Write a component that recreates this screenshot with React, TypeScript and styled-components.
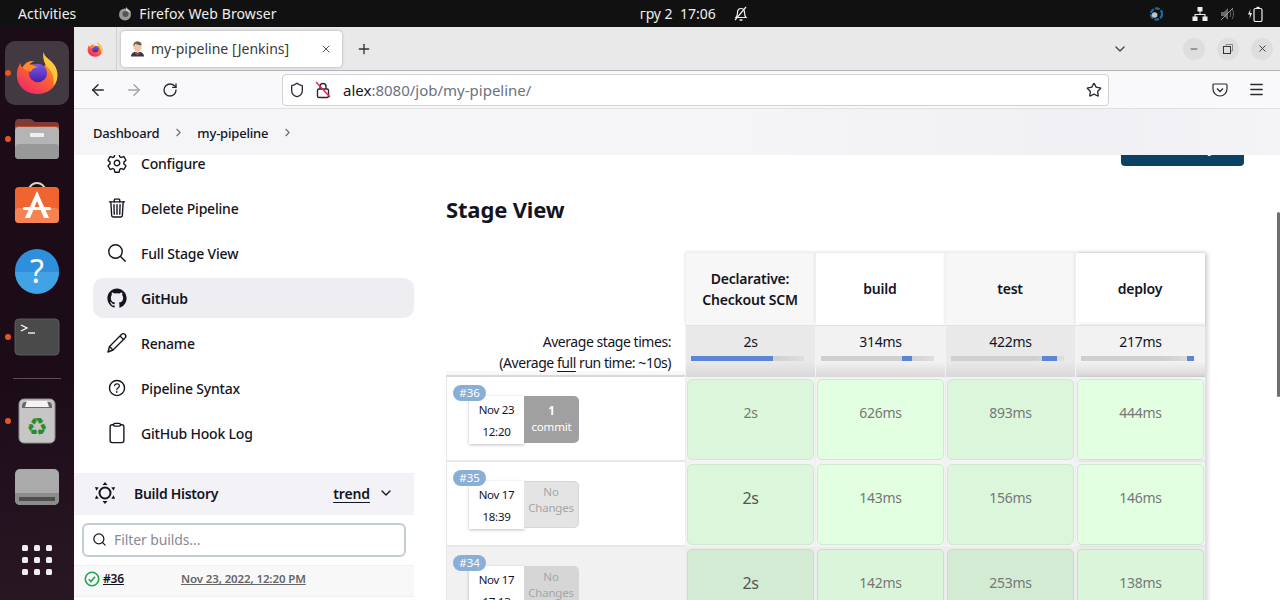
import React from 'react';
import styled, { createGlobalStyle } from 'styled-components';
import { ArrowLeft, ArrowRight, RotateCw, Star, Menu, X, Plus, ChevronDown, ChevronRight, Search, Minus, Shield } from 'lucide-react';
import {
    IoSettingsOutline,
    IoTrashOutline,
    IoSearchOutline,
    IoLogoGithub,
    IoHelpCircleOutline,
    IoClipboardOutline,
} from 'react-icons/io5';

const FONT = '"Noto Sans", "Open Sans", sans-serif';

const GlobalStyle = createGlobalStyle`
    html, body { margin:0; padding:0; background:#fff; overflow:hidden; }
    body { font-family:${FONT}; color:#14141f; }
    * { box-sizing:border-box; }
`;

const Desktop = styled.div`
    width:1280px;
    height:600px;
    display:flex;
    flex-direction:column;
    overflow:hidden;
`;

/* gnome top bar */
const TopBar = styled.div`
    height:27px;
    flex:none;
    background:#111;
    color:#eee;
    display:flex;
    align-items:center;
    font-size:14px;
    padding-left:18px;
`;
const AppMenu = styled.div`
    display:flex;
    align-items:center;
    gap:7px;
    margin-left:42px;
    letter-spacing:0.1px;
`;
const Clock = styled.div`
    margin-left:363px;
    white-space:pre;
`;
const Tray = styled.div`
    margin-left:auto;
    display:flex;
    align-items:center;
    gap:12px;
    padding-right:17px;
`;

const Body = styled.div`
    flex:1;
    display:flex;
    min-height:0;
`;

/* dock */
const Dock = styled.div`
    width:74px;
    flex:none;
    background:linear-gradient(170deg,#1b0c18 60%,#2a1724);
    padding-top:13px;
    display:flex;
    flex-direction:column;
    align-items:center;
`;
const DockSlot = styled.div<{ $active?:boolean; $dot?:boolean }>`
    width:64px;
    height:64px;
    margin:1px 0;
    flex:none;
    position:relative;
    display:flex;
    align-items:center;
    justify-content:center;
    border-radius:10px;
    background:${(p)=>p.$active?'#433a41':'transparent'};
    &::before{
        content:'';
        display:${(p)=>p.$dot?'block':'none'};
        position:absolute;
        left:0;
        top:29px;
        width:6px;
        height:6px;
        border-radius:50%;
        background:#e95420;
    }
`;
const DockSeparator = styled.div`
    width:48px;
    height:1px;
    background:#5a4d57;
    margin:8px 0 9px;
`;
const AppGrid = styled.div`
    display:grid;
    grid-template-columns:repeat(3,6px);
    gap:6px;
`;
const AppGridDot = styled.span`
    width:6px;
    height:6px;
    border-radius:1.5px;
    background:#eee;
`;
const DockLast = styled.div`
    margin-top:7px;
    height:66px;
    display:flex;
    align-items:center;
`;

/* browser */
const Browser = styled.div`
    flex:1;
    min-width:0;
    display:flex;
    flex-direction:column;
    position:relative;
`;
const TabBar = styled.div`
    height:44px;
    flex:none;
    background:#e9e9e9;
    border-bottom:1px solid #b4b4b4;
    display:flex;
    align-items:center;
`;
const FirefoxMenu = styled.div`
    width:43px;
    height:43px;
    border-right:1px solid #cfcfcf;
    display:flex;
    align-items:center;
    justify-content:center;
`;
const Tab = styled.div`
    width:221px;
    height:36px;
    margin-left:4px;
    background:#fff;
    border-radius:4px;
    box-shadow:0 0 3px rgba(0,0,0,0.3);
    display:flex;
    align-items:center;
    padding:0 10px 0 9px;
    gap:6px;
    font-size:14px;
    color:#3a3a3a;
`;
const TabTitle = styled.span`
    flex:1;
    white-space:nowrap;
`;
const IconSlot = styled.div<{ $w?:number; $ml?:number }>`
    width:${(p)=>p.$w||36}px;
    margin-left:${(p)=>p.$ml||0}px;
    flex:none;
    display:flex;
    align-items:center;
    justify-content:center;
`;
const WindowButton = styled.div`
    width:22px;
    height:22px;
    border-radius:50%;
    background:#dedede;
    display:flex;
    align-items:center;
    justify-content:center;
    margin-left:12px;
`;
const WindowButtons = styled.div`
    margin-left:auto;
    display:flex;
    padding-right:7px;
`;
const NavBar = styled.div`
    height:38px;
    flex:none;
    background:#f9f9fb;
    border-bottom:1px solid #e0e0e2;
    display:flex;
    align-items:center;
    padding-left:6px;
`;
const UrlBox = styled.div`
    width:827px;
    height:32px;
    margin-left:2px;
    background:#fff;
    border:1px solid #cfcfd8;
    border-radius:4px;
    display:flex;
    align-items:center;
    padding:0 6px 0 5px;
    font-size:15px;
    color:#6b7280;
`;
const UrlHost = styled.span`
    color:#15141a;
`;
const UrlText = styled.div`
    flex:1;
    margin-left:11px;
`;

/* jenkins page */
const Page = styled.div`
    flex:1;
    min-height:0;
    position:relative;
    overflow:hidden;
    background:#fff;
    display:flex;
    flex-direction:column;
`;
const Breadcrumbs = styled.div`
    height:46px;
    flex:none;
    position:relative;
    z-index:2;
    background:linear-gradient(90deg,#f5f5f7 55%,#f0f0f4 85%,#f4f4f7);
    display:flex;
    align-items:center;
    padding:1px 0 0 19px;
    font-size:13px;
    font-weight:500;
    color:#14141f;
`;
const Crumb = styled.span`
    white-space:nowrap;
    letter-spacing:-0.2px;
`;
const CrumbSep = styled.span`
    width:38px;
    display:flex;
    justify-content:center;
    color:#6b6b75;
`;
const Content = styled.div`
    flex:1;
    min-height:0;
    display:flex;
`;
const Sidebar = styled.div`
    width:340px;
    flex:none;
    margin-top:-12px;
    display:flex;
    flex-direction:column;
`;
const SideTasks = styled.div`
    display:flex;
    flex-direction:column;
    gap:5px;
    padding-left:19px;
`;
const SideItem = styled.div<{ $active?:boolean }>`
    height:40px;
    border-radius:10px;
    background:${(p)=>p.$active?'#eeeef2':'transparent'};
    display:flex;
    align-items:center;
    padding-left:13px;
    gap:13px;
    font-size:14px;
    letter-spacing:-0.2px;
    color:#14141f;
    font-weight:${(p)=>p.$active?600:500};
`;
const SideIcon = styled.span<{ $size?:number }>`
    width:22px;
    height:22px;
    flex:none;
    display:flex;
    align-items:center;
    justify-content:center;
    font-size:${(p)=>p.$size||22}px;
`;
const HistoryHead = styled.div`
    height:42px;
    margin-top:20px;
    flex:none;
    background:#f3f3f7;
    display:flex;
    align-items:center;
    padding:0 0 2px 19px;
    font-size:14px;
    font-weight:600;
`;
const HistoryTitle = styled.span`
    margin-left:17px;
    letter-spacing:-0.3px;
`;
const TrendLink = styled.span`
    margin-left:auto;
    text-decoration:underline;
    text-underline-offset:3px;
    letter-spacing:-0.1px;
`;
const TrendChevron = styled.span`
    display:flex;
    margin:0 20px 0 8px;
`;
const FilterBox = styled.div`
    height:34px;
    margin:8px 8px 0;
    flex:none;
    border:2px solid #c3ccd1;
    border-radius:6px;
    display:flex;
    align-items:center;
    gap:7px;
    padding:0 0 2px 8px;
    font-size:14px;
    color:#8a8a94;
    letter-spacing:-0.1px;
`;
const BuildRow = styled.div`
    height:32px;
    margin-top:8px;
    flex:none;
    background:#f8f8f8;
    border-top:1px solid #efefef;
    border-bottom:1px solid #efefef;
    display:flex;
    align-items:center;
    padding:0 0 5px 10px;
    font-size:12px;
    font-weight:600;
`;
const BuildLink = styled.span`
    margin-left:3px;
    text-decoration:underline;
    width:78px;
    letter-spacing:-0.2px;
`;
const BuildDate = styled.span`
    text-decoration:underline;
    color:#666;
    font-size:11.5px;
    letter-spacing:-0.12px;
`;

const Main = styled.div`
    flex:1;
    min-width:0;
    padding-left:32px;
    display:flex;
    flex-direction:column;
`;
const ActionButton = styled.div`
    align-self:flex-end;
    width:123px;
    height:38px;
    flex:none;
    margin:-27px 36px 0 0;
    background:#0b4264;
    border-radius:4px;
    color:#fff;
    font-size:14px;
    font-weight:600;
    display:flex;
    align-items:center;
    justify-content:center;
    white-space:nowrap;
`;
const Title = styled.h2`
    margin:28px 0 0;
    height:30px;
    line-height:30px;
    font-size:22px;
    font-weight:700;
    letter-spacing:-0.15px;
`;
const StageGrid = styled.div`
    margin-top:29px;
    display:grid;
    grid-template-columns:239px repeat(4,130px);
    grid-template-rows:72px 52px repeat(3,85px);
    width:759px;
`;
const StageHead = styled.div<{ $odd:boolean; $last?:boolean }>`
    background:${(p)=>p.$odd?'#f7f7f7':'#fff'};
    border-left:1px solid #f0f0f0;
    box-shadow:0 -1px 3px rgba(0,0,0,0.12)${(p)=>p.$last?',3px 0 4px rgba(0,0,0,0.15)':''};
    display:flex;
    align-items:center;
    justify-content:center;
    text-align:center;
    font-size:14px;
    font-weight:600;
    line-height:21px;
    letter-spacing:-0.2px;
    padding:0 1px 1px 0;
`;
const AvgLabel = styled.div`
    grid-column:1;
    display:flex;
    flex-direction:column;
    align-items:flex-end;
    justify-content:flex-end;
    padding:0 14px 2px 0;
    font-size:14px;
    line-height:21px;
    letter-spacing:-0.45px;
    border-bottom:2px solid #d9d9d9;
    background:linear-gradient(#fff 88%,#f4f4f4);
`;
const FullLink = styled.span`
    text-decoration:underline;
    text-underline-offset:3px;
`;
const AvgCell = styled.div<{ $odd:boolean; $last?:boolean }>`
    background:linear-gradient(${(p)=>p.$odd?'#e9e9e9':'#f2f2f2'} 70%,#d8d8d8);
    border-left:1px solid #f3f3f3;
    border-top:1px solid #e3e3e3;
    box-shadow:${(p)=>p.$last?'3px 0 4px rgba(0,0,0,0.15)':'none'};
    padding:6px 5px 0;
    text-align:center;
    font-size:14px;
    line-height:20px;
    letter-spacing:-0.3px;
    display:flex;
    flex-direction:column;
    align-items:center;
`;
const AvgBar = styled.div`
    width:113px;
    height:5px;
    margin:4px 6px 0 0;
    background:linear-gradient(90deg,#cfcfcf 72%,#dedede);
    position:relative;
`;
const AvgFill = styled.div<{ $left:number; $width:number }>`
    position:absolute;
    top:0;
    bottom:0;
    left:${(p)=>p.$left}px;
    width:${(p)=>p.$width}px;
    background:#5b86d6;
`;
const RunCell = styled.div<{ $shaded?:boolean }>`
    position:relative;
    border-left:1px solid #e6e6e6;
    border-bottom:2px solid #e8e8e8;
    background:${(p)=>p.$shaded?'#f1f1f1':'#fff'};
    padding:19px 0 0 22px;
    display:flex;
    align-items:flex-start;
`;
const RunBadge = styled.div`
    position:absolute;
    left:6px;
    top:8px;
    width:33px;
    height:16px;
    border-radius:8px;
    background:#8aafd6;
    color:#fff;
    font-size:11.5px;
    line-height:16px;
    text-align:center;
    z-index:1;
`;
const RunDate = styled.div`
    width:55px;
    height:48px;
    flex:none;
    background:#fff;
    box-shadow:0 1px 3px rgba(0,0,0,0.25);
    font-size:11.5px;
    line-height:22px;
    text-align:center;
    padding-top:3px;
    letter-spacing:-0.3px;
`;
const RunChanges = styled.div<{ $commit?:boolean; $shaded?:boolean }>`
    width:55px;
    height:47px;
    flex:none;
    background:${(p)=>p.$commit?'#a0a0a0':p.$shaded?'#d6d6d6':'#e4e4e4'};
    border:${(p)=>p.$commit?'none':'1px solid #d6d6d6'};
    border-left:none;
    border-radius:0 5px 5px 0;
    color:${(p)=>p.$commit?'#fff':'#a6a6a6'};
    font-size:11.5px;
    line-height:16px;
    text-align:center;
    padding-top:${(p)=>p.$commit?7:2}px;
    letter-spacing:-0.2px;
`;
const CommitCount = styled.div`
    font-weight:700;
`;
const StageColumnCell = styled.div<{ $shaded?:boolean; $last?:boolean }>`
    padding:2px 1px 2px 1px;
    background:${(p)=>p.$shaded?'#ececec':'#f3f3f3'};
    border-left:1px solid #eee;
    box-shadow:${(p)=>p.$last?'3px 0 4px rgba(0,0,0,0.15)':'none'};
    display:flex;
`;
const StageBox = styled.div<{ $odd:boolean; $shaded?:boolean; $big?:boolean }>`
    flex:1;
    border-radius:5px;
    border:1px solid ${(p)=>p.$shaded?'#c6dfc6':'#d0e8d0'};
    background:${(p)=>p.$shaded?(p.$odd?'#d3ebd3':'#dbf5db'):(p.$odd?'#dcf6dc':'#e2ffe2')};
    display:flex;
    align-items:center;
    justify-content:center;
    padding-bottom:14px;
    font-size:${(p)=>p.$big?16:14}px;
    color:${(p)=>p.$big?'#555':'#777'};
    letter-spacing:-0.3px;
`;
const Scrollbar = styled.div`
    position:absolute;
    right:0;
    top:103px;
    width:3px;
    height:185px;
    background:#6f6f6f;
    border-radius:2px;
    z-index:3;
`;

/* drawn icons */
const FirefoxLogo = ({ size }:{ size:number }) => (
    <svg width={size} height={size} viewBox="0 0 48 48">
        <defs>
            <linearGradient id={`ffa${size}`} x1="0.8" y1="0" x2="0.2" y2="1">
                <stop offset="0" stopColor="#ffbd2e" />
                <stop offset="0.45" stopColor="#ff6a2a" />
                <stop offset="1" stopColor="#f0246e" />
            </linearGradient>
            <linearGradient id={`ffb${size}`} x1="0.5" y1="0" x2="0.5" y2="1">
                <stop offset="0" stopColor="#7a5be8" />
                <stop offset="1" stopColor="#4a1fa8" />
            </linearGradient>
        </defs>
        <path d="M31 1c1 5 5 7 9 11 5 5 7 11 6 17-1 11-10 18-22 18C11 47 2 38 2 26c0-6 2-10 4-13 0 2 1 4 2 5 3-5 8-8 13-7-3 1-5 3-5 4 3-1 12 0 15 2 3 1 4-9 0-16z" fill={`url(#ffa${size})`} />
        <path d="M31 1c1 5 5 7 9 11 5 5 7 11 6 17 0 3-2 7-4 9 1-8-1-15-6-20-4-4-6-10-5-17z" fill="#ffc83a" />
        <circle cx="25" cy="24" r="10" fill={`url(#ffb${size})`} />
        <path d="M8 18c3-5 8-8 13-7-3 1-5 3-5 4 4 0 8 2 9 3-4 0-7 2-7 4-3 1-6-1-10-4z" fill="#ff8a2a" />
    </svg>
);
const JenkinsHead = () => (
    <svg width="15" height="16" viewBox="0 0 16 16">
        <path d="M1 16c0-3 2-4 4-5l3 1 3-1c2 1 4 2 4 5z" fill="#2f3b4c" />
        <path d="M6 11l2 2 2-2 1 1-3 3-3-3z" fill="#d33833" />
        <path d="M3.500 5c0-3 2-5 4.500-5s4.500 2 4.500 5-2 6-4.500 6-4.500-3-4.500-6z" fill="#eec9a8" />
        <path d="M4 5c-1-3 1-5 4-5s5 2 4 4c-2 0-5-1-6-2-1 1-1 2-2 3z" fill="#6b5a4a" />
    </svg>
);
const FolderIcon = () => (
    <svg width="46" height="42" viewBox="0 0 46 42">
        <path d="M1 6c0-3 1-5 4-5h12l4 3h20c3 0 4 1 4 4v10H1z" fill="#7d3b3a" />
        <path d="M1 8h44v6H1z" fill="#c8552b" opacity="0.75" />
        <rect x="1" y="9" width="44" height="32" rx="4" fill="#b4b4b4" />
        <rect x="1" y="26" width="44" height="15" rx="4" fill="#989898" />
        <rect x="16" y="15" width="14" height="4" rx="1" fill="#efefef" />
    </svg>
);
const StoreIcon = () => (
    <svg width="46" height="46" viewBox="0 0 46 46">
        <path d="M15 8c0-4 4-7 8-7s8 3 8 7" fill="none" stroke="#e8d6b8" strokeWidth="2" />
        <rect x="1" y="5" width="44" height="36" rx="4" fill="#f0652f" />
        <rect x="1" y="26" width="44" height="15" rx="4" fill="#f58353" />
        <path d="M23 9l12 27h-5l-7-17-7 17h-5z" fill="#fff" />
        <rect x="9" y="25" width="28" height="3" rx="1.500" fill="#fff" />
    </svg>
);
const HelpIcon = () => (
    <svg width="46" height="46" viewBox="0 0 46 46">
        <circle cx="23" cy="23" r="22" fill="#2f8fdc" />
        <path d="M1 24h44a22 22 0 0 1-44 0z" fill="#41a3e6" />
        <text x="23" y="35" textAnchor="middle" fontSize="32" fill="#fff" fontFamily="Noto Sans, sans-serif">?</text>
    </svg>
);
const TerminalIcon = () => (
    <svg width="46" height="38" viewBox="0 0 46 38">
        <rect x="1" y="1" width="44" height="36" rx="4" fill="#4a4a4a" stroke="#5a5a5a" />
        <path d="M7 7l6 3-6 3" fill="none" stroke="#fff" strokeWidth="1.300" />
        <path d="M14 15h7" stroke="#fff" strokeWidth="1.300" />
    </svg>
);
const TrashIcon = () => (
    <svg width="38" height="46" viewBox="0 0 38 46">
        <rect x="1" y="1" width="36" height="44" rx="5" fill="#c6c6c6" stroke="#8d8d8d" />
        <path d="M4 8c0-2 1-4 3-4h24c2 0 3 2 3 4v2H4z" fill="#6a6a6a" />
        <path d="M7 9l2-6h20l2 6z" fill="#f4f4f4" />
        <text x="19" y="37" textAnchor="middle" fontSize="24" fill="#2c8c2c" fontFamily="DejaVu Sans, sans-serif">♻</text>
    </svg>
);
const DiskIcon = () => (
    <svg width="46" height="38" viewBox="0 0 46 38">
        <rect x="1" y="1" width="44" height="36" rx="5" fill="#aaaaaa" />
        <path d="M1 25h44v7a5 5 0 0 1-5 5H6a5 5 0 0 1-5-5z" fill="#8c8c8c" />
        <rect x="5" y="29" width="36" height="4" fill="#4f4f4f" />
    </svg>
);
const BuildHistoryIcon = () => (
    <svg width="24" height="24" viewBox="0 0 24 24">
        <circle cx="12" cy="12" r="5.500" fill="none" stroke="#14141f" strokeWidth="2" />
        <path d="M12 1l2.500 3h-5zM12 23l-2.500-3h5zM2 6l3.800.6-2.500 3.200zM22 18l-3.800-.6 2.500-3.200zM22 6l-1.300 3.800-2.500-3.200zM2 18l1.300-3.800 2.500 3.200z" fill="#14141f" />
    </svg>
);
const PencilIcon = () => (
    <svg width="22" height="22" viewBox="0 0 22 22">
        <path d="M2 20l1.500-5.500L15.500 2.500c1-1 2.500-1 3.500 0s1 2.500 0 3.500L7 18z" fill="none" stroke="#14141f" strokeWidth="1.400" strokeLinejoin="round" />
        <path d="M3.500 14.500L7 18M14 4l4 4" fill="none" stroke="#14141f" strokeWidth="1.200" />
    </svg>
);
const CheckCircle = () => (
    <svg width="16" height="16" viewBox="0 0 16 16">
        <circle cx="8" cy="8" r="6.700" fill="none" stroke="#1ea64f" strokeWidth="1.600" />
        <path d="M4.800 8.200l2.200 2.300 4-4.800" fill="none" stroke="#1ea64f" strokeWidth="1.600" />
    </svg>
);
const PocketIcon = () => (
    <svg width="16" height="16" viewBox="0 0 16 16">
        <path d="M2 2h12a1 1 0 0 1 1 1v4a7 7 0 0 1-14 0V3a1 1 0 0 1 1-1z" fill="none" stroke="#2b2a33" strokeWidth="1.200" />
        <path d="M5 6.500l3 3 3-3" fill="none" stroke="#2b2a33" strokeWidth="1.300" />
    </svg>
);
const InsecureLock = () => (
    <svg width="16" height="18" viewBox="0 0 16 18">
        <path d="M5 8V5.500a3 3 0 0 1 6 0V8" fill="none" stroke="#2b2a33" strokeWidth="1.400" />
        <rect x="2.500" y="8" width="11" height="8.500" rx="1.500" fill="none" stroke="#2b2a33" strokeWidth="1.400" />
        <path d="M1 1l14 15" stroke="#e22850" strokeWidth="1.500" />
    </svg>
);
const BellOff = () => (
    <svg width="14" height="16" viewBox="0 0 14 16">
        <path d="M2 11.500c1.500-1.500 1.500-3 1.500-5 0-2.500 1.500-4 3.500-4s3.500 1.500 3.500 4c0 2 0 3.500 1.500 5z" fill="none" stroke="#eee" strokeWidth="1.200" />
        <path d="M1 14L12 1" stroke="#eee" strokeWidth="1.200" />
        <path d="M5.500 14h3" stroke="#eee" strokeWidth="1.500" />
    </svg>
);
const SteamIcon = () => (
    <svg width="13" height="14" viewBox="0 0 14 14">
        <circle cx="7" cy="7" r="6" fill="none" stroke="#1c6e9c" strokeWidth="2.400" strokeDasharray="5 1.500" />
        <circle cx="5" cy="8" r="3" fill="#bfc4c8" />
    </svg>
);
const NetworkIcon = () => (
    <svg width="16" height="14" viewBox="0 0 16 14" fill="#eee">
        <rect x="5.500" y="0" width="5" height="4.500" />
        <rect x="0.500" y="9.500" width="5" height="4.500" />
        <rect x="10.500" y="9.500" width="5" height="4.500" />
        <path d="M7.500 4h1v3h5v3h-1V8H3.500v2h-1V7h5z" />
    </svg>
);
const MutedIcon = () => (
    <svg width="15" height="14" viewBox="0 0 15 14">
        <path d="M1 5h3l4-4v12L4 9H1z" fill="#6a6a6a" />
        <path d="M10 4c1 2 1 4 0 6M12 2c2 3 2 7 0 10" fill="none" stroke="#6a6a6a" />
        <path d="M1 13L13 1" stroke="#999" />
    </svg>
);
const BatteryIcon = () => (
    <svg width="16" height="16" viewBox="0 0 16 16">
        <path d="M3.500 3L1 8.500h2L2.500 13 5 7H3z" fill="#eee" />
        <rect x="7" y="2.500" width="8" height="13" rx="1.500" fill="none" stroke="#eee" strokeWidth="1.200" />
        <rect x="9.500" y="0.800" width="3" height="1.700" fill="#eee" />
    </svg>
);
const RestoreIcon = () => (
    <svg width="10" height="10" viewBox="0 0 10 10">
        <rect x="0.500" y="2.500" width="7" height="7" fill="none" stroke="#333" />
        <path d="M3 2.500V.5h6.500V7H8" fill="none" stroke="#888" />
    </svg>
);

const TASKS = [
    { label:'Configure', icon:<IoSettingsOutline /> },
    { label:'Delete Pipeline', icon:<IoTrashOutline /> },
    { label:'Full Stage View', icon:<IoSearchOutline /> },
    { label:'GitHub', icon:<IoLogoGithub />, active:true },
    { label:'Rename', icon:<PencilIcon /> },
    { label:'Pipeline Syntax', icon:<IoHelpCircleOutline />, size:26 },
    { label:'GitHub Hook Log', icon:<IoClipboardOutline /> },
];

const STAGES = [
    { head:['Declarative:','Checkout SCM'], avg:'2s', left:0, width:82 },
    { head:['build'], avg:'314ms', left:81, width:10 },
    { head:['test'], avg:'422ms', left:91, width:15 },
    { head:['deploy'], avg:'217ms', left:106, width:7 },
];

const RUNS = [
    { id:'#36', date:'Nov 23', time:'12:20', commit:true, times:['2s','626ms','893ms','444ms'], big:false },
    { id:'#35', date:'Nov 17', time:'18:39', times:['2s','143ms','156ms','146ms'], big:true },
    { id:'#34', date:'Nov 17', time:'17:13', times:['2s','142ms','253ms','138ms'], big:true, shaded:true },
];

const App = () => {
    return (
        <Desktop>
            <GlobalStyle />
            <TopBar>
                <span>Activities</span>
                <AppMenu>
                    <svg width="14" height="14" viewBox="0 0 14 14">
                        <circle cx="7" cy="7.500" r="6" fill="#9a9a9a" />
                        <circle cx="7.500" cy="7" r="3" fill="#555" />
                        <path d="M8 0c1 2 4 3 5 6-2-1-3-2-5-2z" fill="#ccc" />
                    </svg>
                    <span>Firefox Web Browser</span>
                </AppMenu>
                <Clock>{'гру 2  17:06'}</Clock>
                <IconSlot $w={14} $ml={18}><BellOff /></IconSlot>
                <Tray>
                    <SteamIcon />
                    <IconSlot $w={16} $ml={17}><NetworkIcon /></IconSlot>
                    <MutedIcon />
                    <BatteryIcon />
                </Tray>
            </TopBar>
            <Body>
                <Dock>
                    <DockSlot $active $dot><FirefoxLogo size={44} /></DockSlot>
                    <DockSlot $dot><FolderIcon /></DockSlot>
                    <DockSlot><StoreIcon /></DockSlot>
                    <DockSlot><HelpIcon /></DockSlot>
                    <DockSlot $dot><TerminalIcon /></DockSlot>
                    <DockSeparator />
                    <DockSlot $dot><TrashIcon /></DockSlot>
                    <DockSlot><DiskIcon /></DockSlot>
                    <DockLast>
                        <AppGrid>
                            {Array.from({ length:9 }).map((_,i)=><AppGridDot key={i} />)}
                        </AppGrid>
                    </DockLast>
                </Dock>
                <Browser>
                    <TabBar>
                        <FirefoxMenu><FirefoxLogo size={16} /></FirefoxMenu>
                        <Tab>
                            <JenkinsHead />
                            <TabTitle>my-pipeline [Jenkins]</TabTitle>
                            <X size={12} color="#555" />
                        </Tab>
                        <IconSlot $w={44}><Plus size={16} color="#333" /></IconSlot>
                        <WindowButtons>
                            <IconSlot $w={16}><ChevronDown size={18} color="#444" /></IconSlot>
                            <IconSlot $w={16} $ml={27}><span /></IconSlot>
                            <WindowButton><Minus size={10} color="#333" /></WindowButton>
                            <WindowButton><RestoreIcon /></WindowButton>
                            <WindowButton><X size={11} color="#333" /></WindowButton>
                        </WindowButtons>
                    </TabBar>
                    <NavBar>
                        <IconSlot><ArrowLeft size={18} color="#2b2a33" /></IconSlot>
                        <IconSlot><ArrowRight size={18} color="#a5a5a8" /></IconSlot>
                        <IconSlot><RotateCw size={16} color="#2b2a33" /></IconSlot>
                        <IconSlot $w={92} />
                        <UrlBox>
                            <IconSlot $w={18}><Shield size={16} color="#2b2a33" /></IconSlot>
                            <IconSlot $w={18} $ml={8}><InsecureLock /></IconSlot>
                            <UrlText><UrlHost>alex</UrlHost>:8080/job/my-pipeline/</UrlText>
                            <Star size={16} color="#2b2a33" />
                        </UrlBox>
                        <IconSlot $w={36} $ml={93}><PocketIcon /></IconSlot>
                        <IconSlot $w={36}><Menu size={17} color="#2b2a33" /></IconSlot>
                    </NavBar>
                    <Page>
                        <Breadcrumbs>
                            <Crumb>Dashboard</Crumb>
                            <CrumbSep><ChevronRight size={13} /></CrumbSep>
                            <Crumb>my-pipeline</Crumb>
                            <CrumbSep><ChevronRight size={13} /></CrumbSep>
                        </Breadcrumbs>
                        <Content>
                            <Sidebar>
                                <SideTasks>
                                    {TASKS.map((t)=>(
                                        <SideItem key={t.label} $active={t.active}>
                                            <SideIcon $size={t.size}>{t.icon}</SideIcon>
                                            {t.label}
                                        </SideItem>
                                    ))}
                                </SideTasks>
                                <HistoryHead>
                                    <BuildHistoryIcon />
                                    <HistoryTitle>Build History</HistoryTitle>
                                    <TrendLink>trend</TrendLink>
                                    <TrendChevron><ChevronDown size={16} /></TrendChevron>
                                </HistoryHead>
                                <FilterBox>
                                    <Search size={15} color="#14141f" />
                                    Filter builds...
                                </FilterBox>
                                <BuildRow>
                                    <CheckCircle />
                                    <BuildLink>#36</BuildLink>
                                    <BuildDate>Nov 23, 2022, 12:20 PM</BuildDate>
                                </BuildRow>
                            </Sidebar>
                            <Main>
                                <ActionButton>Disable Project</ActionButton>
                                <Title>Stage View</Title>
                                <StageGrid>
                                    <span />
                                    {STAGES.map((s,i)=>(
                                        <StageHead key={s.avg} $odd={i%2===0} $last={i===3}>
                                            <div>{s.head.map((h)=><div key={h}>{h}</div>)}</div>
                                        </StageHead>
                                    ))}
                                    <AvgLabel>
                                        <span>Average stage times:</span>
                                        <span>(Average <FullLink>full</FullLink> run time: ~10s)</span>
                                    </AvgLabel>
                                    {STAGES.map((s,i)=>(
                                        <AvgCell key={s.avg} $odd={i%2===0} $last={i===3}>
                                            {s.avg}
                                            <AvgBar><AvgFill $left={s.left} $width={s.width} /></AvgBar>
                                        </AvgCell>
                                    ))}
                                    {RUNS.map((r)=>(
                                        <React.Fragment key={r.id}>
                                            <RunCell $shaded={r.shaded}>
                                                <RunBadge>{r.id}</RunBadge>
                                                <RunDate>{r.date}<br />{r.time}</RunDate>
                                                <RunChanges $commit={r.commit} $shaded={r.shaded}>
                                                    {r.commit
                                                        ? <><CommitCount>1</CommitCount>commit</>
                                                        : <>No<br />Changes</>}
                                                </RunChanges>
                                            </RunCell>
                                            {r.times.map((t,i)=>(
                                                <StageColumnCell key={i} $shaded={r.shaded} $last={i===3}>
                                                    <StageBox $odd={i%2===0} $shaded={r.shaded} $big={r.big&&i===0}>{t}</StageBox>
                                                </StageColumnCell>
                                            ))}
                                        </React.Fragment>
                                    ))}
                                </StageGrid>
                            </Main>
                        </Content>
                        <Scrollbar />
                    </Page>
                </Browser>
            </Body>
        </Desktop>
    );
};

export default App;
